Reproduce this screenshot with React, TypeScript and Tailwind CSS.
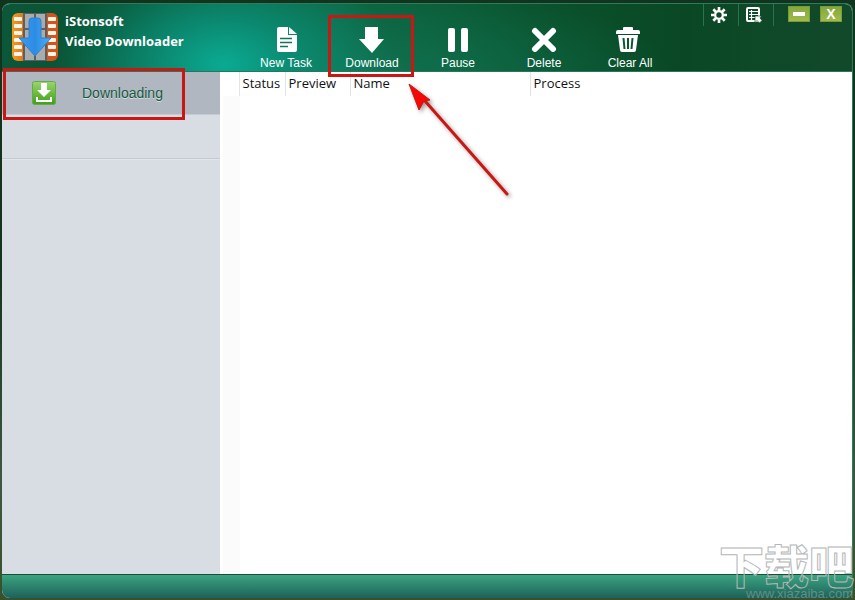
import type { ReactNode } from "react";

function FilmLogo() {
  const holes = [0, 1, 2, 3, 4, 5];
  return (
    <svg width="46" height="48" viewBox="0 0 46 48" aria-hidden="true">
      <defs>
        <linearGradient id="film" x1="0" x2="1">
          <stop offset="0" stopColor="#f39a23" />
          <stop offset="0.45" stopColor="#c8601d" />
          <stop offset="1" stopColor="#d4521c" />
        </linearGradient>
        <linearGradient id="blue" x1="0" x2="1" y1="0" y2="0">
          <stop offset="0" stopColor="#3c9cf0" />
          <stop offset="0.5" stopColor="#2b8ce4" />
          <stop offset="1" stopColor="#4fb0f4" />
        </linearGradient>
      </defs>
      <rect width="46" height="48" rx="6" fill="url(#film)" />
      <rect x="11" y="0" width="24" height="48" fill="#5c5f62" />
      <path d="M13 1h9v14h-9zM24 1h9v14h-9zM13 17h9v14h-9zM24 17h9v14h-9zM13 33h9v14h-9zM24 33h9v14h-9z" fill="#a9acaf" />
      {holes.map((i) => (
        <g key={i} fill="#fff4e6">
          <rect x="2" y={4 + i * 7} width="8" height="4" rx="1" />
          <rect x="36" y={4 + i * 7} width="8" height="4" rx="1" />
        </g>
      ))}
      <path d="M17 8q0-3 3-3h6q3 0 3 3v17h10L23 43 7 25h10z" fill="url(#blue)" stroke="#2b80d0" strokeWidth="1" strokeLinejoin="round" />
    </svg>
  );
}

const icons: Record<string, ReactNode> = {
  "New Task": (
    <svg width="22" height="25" viewBox="0 0 22 25" className="ml-0.5" aria-hidden="true">
      <path d="M3 0h9v8h9v15q0 2-2 2H3q-2 0-2-2V2q0-2 2-2z" fill="#fff" />
      <path d="M13 0l8 7h-8z" fill="#fff" />
      <path d="M4 11.500h12M4 15.500h12M4 19.500h8" stroke="#10775b" strokeWidth="1.500" />
    </svg>
  ),
  Download: (
    <svg width="26" height="26" viewBox="0 0 26 26" aria-hidden="true">
      <path d="M6 0h13v12h6L13 26 0 12h6z" fill="#fff" />
    </svg>
  ),
  Pause: (
    <svg width="24" height="25" viewBox="0 0 24 25" aria-hidden="true">
      <rect x="2" y="1" width="7" height="24" rx="2" fill="#fff" />
      <rect x="15" y="1" width="7" height="24" rx="2" fill="#fff" />
    </svg>
  ),
  Delete: (
    <svg width="26" height="25" viewBox="0 0 26 25" aria-hidden="true">
      <path d="M4 4L22 22M22 4L4 22" stroke="#fff" strokeWidth="6" strokeLinecap="round" />
    </svg>
  ),
  "Clear All": (
    <svg width="24" height="25" viewBox="0 0 24 25" className="mr-1" aria-hidden="true">
      <path d="M7 3V1q0-1 1-1h8q1 0 1 1v2h5q2 0 2 2v2H0V5q0-2 2-2z" fill="#fff" />
      <path d="M2 8h20l-2 15q0 2-2 2H6q-2 0-2-2z" fill="#fff" />
      <path d="M7.500 11l1 11M12 11v11M16.500 11l-1 11" stroke="#0b5532" strokeWidth="2" />
    </svg>
  ),
};

function ToolButton({ label, marked }: { label: string; marked?: boolean }) {
  return (
    <button type="button" className="relative flex h-11 w-[86px] flex-col items-center justify-between text-xs leading-4 text-white">
      {icons[label]}
      {label}
      {marked && <span className="absolute -top-3 -bottom-1.5 -left-px w-[86px] border-3 border-[#cb1713]" />}
    </button>
  );
}

function GearIcon() {
  return (
    <svg width="16" height="16" viewBox="0 0 18 18" aria-hidden="true">
      <g stroke="#fff" strokeWidth="3">
        <path d="M9 0v4M9 14v4M0 9h4M14 9h4M2.600 2.600l3 3M12.400 12.400l3 3M15.400 2.600l-3 3M5.600 12.400l-3 3" />
        <circle cx="9" cy="9" r="4.300" fill="none" strokeWidth="2.600" />
      </g>
    </svg>
  );
}

function LogIcon() {
  return (
    <svg width="16" height="16" viewBox="0 0 16 16" aria-hidden="true">
      <rect x="1" y="1" width="12" height="13" rx="1" fill="none" stroke="#fff" strokeWidth="2" />
      <path d="M3 4.500h9M3 7.500h9M3 10.500h7M5.500 3v10" stroke="#fff" strokeWidth="1.200" />
      <path d="M9 9h6.500l-1.500 2 2 2.500-2.500 2.500-2.500-2.500-2 2z" fill="#fff" stroke="#0b4d2c" strokeWidth="0.700" />
    </svg>
  );
}

function TrayIcon() {
  return (
    <svg width="24" height="24" viewBox="0 0 24 24" aria-hidden="true">
      <defs>
        <linearGradient id="tray" x2="0" y2="1">
          <stop offset="0" stopColor="#9ad572" />
          <stop offset="0.550" stopColor="#68b93c" />
          <stop offset="1" stopColor="#419d20" />
        </linearGradient>
      </defs>
      <rect x="0.500" y="0.500" width="23" height="23" rx="2" fill="url(#tray)" stroke="#63ae42" />
      <path d="M9 2h6v7h4l-7 7-7-7h4z" fill="#fff" />
      <path d="M5 16v4h14v-4" fill="none" stroke="#fff" strokeWidth="2" />
    </svg>
  );
}

function Pointer() {
  return (
    <svg width="112" height="126" viewBox="0 0 112 126" className="pointer-events-none absolute top-[73px] left-[401px] drop-shadow-[2px_2px_2px_rgba(0,0,0,0.4)]" aria-hidden="true">
      <path d="M22 24l82 93" stroke="#cb1713" strokeWidth="3" strokeLinecap="round" />
      <path d="M6 7l21 16-6 1-5 9z" fill="#f50805" stroke="#cb1713" strokeWidth="1" />
    </svg>
  );
}

const tools = ["New Task", "Download", "Pause", "Delete", "Clear All"];

export default function App() {
  return (
    <div className="flex h-screen flex-col bg-[linear-gradient(180deg,#12331d,#12361c_45%,#3d583f_80%,#38512c)] pt-[3px] pr-0.5 pb-0.5 pl-0.5 font-['Liberation_Sans',Arial,sans-serif]">
      <div className="relative flex flex-1 flex-col overflow-hidden rounded-lg border-t border-r border-[#2d7d5c] bg-white">
        <header className="relative flex h-17 shrink-0 border-b border-[#28775a] bg-[radial-gradient(ellipse_170px_110px_at_222px_60px,#0baa92_0%,#0a937ccc_40%,transparent_100%),radial-gradient(ellipse_300px_90px_at_370px_70px,#10704f_0%,transparent_100%),linear-gradient(90deg,#0b5739,#0a5132_14%,#0c6540_40%,#0a522d_62%,#0a4825_80%,#12492b)]">
          <div className="flex w-[241px] gap-[7px] pt-[9px] pl-2.5">
            <FilmLogo />
            <h1 className="-mt-0.5 font-['Open_Sans','Noto_Sans',sans-serif] text-[13px] leading-5 font-bold text-white">
              iStonsoft
              <br />
              Video Downloader
            </h1>
          </div>
          <div className="flex pt-[23px]">
            {tools.map((t) => (
              <ToolButton key={t} label={t} marked={t === "Download"} />
            ))}
          </div>
          <div className="ml-auto flex h-[22px] shrink-0 pr-2.5">
            <button type="button" aria-label="Settings" className="flex w-[35px] items-center justify-center border-l border-[#287450] pr-1">
              <GearIcon />
            </button>
            <button type="button" aria-label="Log" className="flex w-9 items-center justify-center border-x border-[#287450] pr-1">
              <LogIcon />
            </button>
            <div className="ml-3.5 flex gap-2.5 pt-0.5">
              <button type="button" aria-label="Minimize" className="flex h-4 w-[22px] items-center justify-center border border-[#789d35] bg-linear-to-b from-[#83a83c] to-[#a2ba4b]">
                <span className="h-1 w-3 bg-white" />
              </button>
              <button type="button" aria-label="Close" className="flex h-4 w-[22px] items-center justify-center border border-[#789d35] bg-linear-to-b from-[#83a83c] to-[#a2ba4b] text-sm leading-4 font-bold text-white">
                X
              </button>
            </div>
          </div>
        </header>

        <div className="flex min-h-0 flex-1">
          <nav className="w-[218px] shrink-0 bg-[#d8dde4]">
            <button type="button" className="relative flex h-[43px] w-full items-center gap-[26px] border-b border-[#c5cbd3] bg-[#b0b7c0] pl-[30px] text-sm text-[#175a40] [text-shadow:0_1px_0_#d8dde4]">
              <TrayIcon />
              Downloading
              <span className="absolute -top-1 left-px h-[52px] w-[182px] border-3 border-[#cb1713]" />
            </button>
            <div className="h-11 border-b border-[#c5cad2] shadow-[0_1px_0_#e2e6eb]" />
          </nav>
          <main className="flex min-w-0 flex-1 flex-col bg-white">
            <table className="w-full table-fixed border-collapse font-['Open_Sans','Noto_Sans',sans-serif] text-[13px] leading-[23px] text-[#111]">
              <thead>
                <tr className="text-left [&>th]:h-6 [&>th]:p-0 [&>th]:pl-[3px] [&>th]:align-top [&>th]:font-normal">
                  <th className="w-[19px] border-r border-[#e3e3e3]" aria-label="Selection" />
                  <th className="w-[46px] border-r border-[#e3e3e3]">Status</th>
                  <th className="w-[65px] border-r border-[#e3e3e3]">Preview</th>
                  <th className="w-[180px] border-r border-[#e3e3e3]">Name</th>
                  <th>Process</th>
                </tr>
              </thead>
            </table>
            <div className="ml-[3px] w-[17px] flex-1 bg-[#fbfbfc]" />
          </main>
        </div>

        <footer className="h-6 shrink-0 border-t border-[#174f3b] bg-linear-to-b from-[#3ba480] to-[#1e625b]" />
        <Pointer />
      </div>

      <div className="pointer-events-none absolute right-0.5 bottom-0 w-[134px] text-transparent">
        <p className="font-['Noto_Sans_CJK_SC',sans-serif] text-[45px] leading-[46px] font-black whitespace-nowrap [-webkit-text-stroke:1px_#b4b8b8]">下载吧</p>
        <p className="text-right text-[13px] leading-3 text-[#8fa5a0]/60">www.xiazaiba.com</p>
      </div>
    </div>
  );
}
